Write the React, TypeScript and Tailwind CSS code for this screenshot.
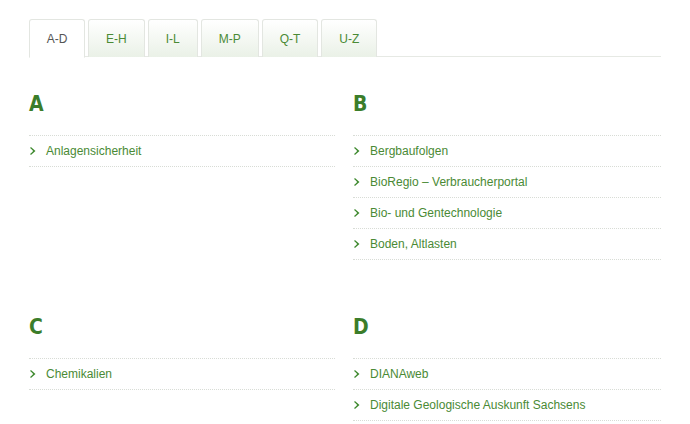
import React from 'react';

const tabs = ['A-D', 'E-H', 'I-L', 'M-P', 'Q-T', 'U-Z'];

const groups: { letter: string; items: string[] }[][] = [
  [
    { letter: 'A', items: ['Anlagensicherheit'] },
    { letter: 'B', items: ['Bergbaufolgen', 'BioRegio – Verbraucherportal', 'Bio- und Gentechnologie', 'Boden, Altlasten'] },
  ],
  [
    { letter: 'C', items: ['Chemikalien'] },
    { letter: 'D', items: ['DIANAweb', 'Digitale Geologische Auskunft Sachsens'] },
  ],
];

function Chevron() {
  return (
    <svg width="6" height="8" viewBox="0 0 6 8" className="shrink-0">
      <path d="M0.5 0.5 L4.5 4 L0.5 7.5" fill="none" stroke="#3f8a2f" strokeWidth="1.3" />
      <path d="M2 2.2 L4 4 L2 5.8" fill="none" stroke="#3f8a2f" strokeWidth="1" />
    </svg>
  );
}

function Group({ letter, items }: { letter: string; items: string[] }) {
  return (
    <div>
      <h2 className="text-[21px] leading-none font-bold text-[#3b7d2a] h-[42px] pt-[1px]" style={{ fontFamily: '"DejaVu Sans Condensed", sans-serif' }}>
        {letter}
      </h2>
      <ul className="border-t border-dotted border-[#d8dcd6]">
        {items.map((it) => (
          <li key={it} className="h-[31px] flex items-center gap-[10px] pl-[1px] border-b border-dotted border-[#d8dcd6]">
            <Chevron />
            <span className="text-[12px] text-[#4a8a35]">{it}</span>
          </li>
        ))}
      </ul>
    </div>
  );
}

export default function App() {
  return (
    <div className="bg-white w-[690px] h-[424px] overflow-hidden pt-[19px] px-[29px]" style={{ fontFamily: '"Liberation Sans", Arial, sans-serif' }}>
      <div className="w-[632px]">
        <div className="flex gap-[3px] h-[38px] border-b border-[#e6e9e4]">
          {tabs.map((t, i) => (
            <div
              key={t}
              className={
                i === 0
                  ? 'w-[56px] h-[39px] flex items-center justify-center text-[12px] text-[#555] bg-white border border-[#e3e6e1] border-b-white rounded-t-[3px]'
                  : 'px-[17px] h-[38px] flex items-center justify-center text-[12px] text-[#4a8a35] bg-gradient-to-b from-white to-[#eaf1e7] border border-b-0 border-[#e3e6e1] rounded-t-[3px]'
              }
            >
              {t}
            </div>
          ))}
        </div>
        {groups.map((row, r) => (
          <div key={r} className={'grid grid-cols-[306px_308px] gap-[18px] ' + (r === 0 ? 'mt-[36px]' : 'mt-[56px]')}>
            {row.map((g) => (
              <Group key={g.letter} {...g} />
            ))}
          </div>
        ))}
      </div>
    </div>
  );
}
